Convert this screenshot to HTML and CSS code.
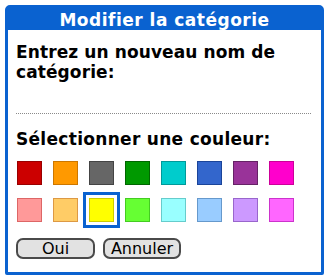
FILE: index.html
```html
<!DOCTYPE html>
<html lang="fr">
<head>
<meta charset="utf-8">
<link rel="stylesheet" href="styles.css">
</head>
<body>
<div class="dialog">
  <div class="title">Modifier la catégorie</div>
  <div class="content">
    <p class="label">Entrez un nouveau nom de<br>catégorie:</p>
    <div class="field"></div>
    <p class="label label-color">Sélectionner une couleur:</p>
    <div class="swatches">
      <span class="sw" style="background:#cc0000;border-color:#990000"></span>
      <span class="sw" style="background:#ff9900;border-color:#cc7700"></span>
      <span class="sw" style="background:#666666;border-color:#444444"></span>
      <span class="sw" style="background:#009900;border-color:#006600"></span>
      <span class="sw" style="background:#00cccc;border-color:#009999"></span>
      <span class="sw" style="background:#3366cc;border-color:#1a4499"></span>
      <span class="sw" style="background:#993399;border-color:#662266"></span>
      <span class="sw" style="background:#ff00cc;border-color:#cc0099"></span>
      <span class="sw" style="background:#ff9999;border-color:#dd6666"></span>
      <span class="sw" style="background:#ffcc66;border-color:#dd9944"></span>
      <span class="sw selected" style="background:#ffff00;border-color:#cccc00"></span>
      <span class="sw" style="background:#66ff33;border-color:#44cc22"></span>
      <span class="sw" style="background:#99ffff;border-color:#66cccc"></span>
      <span class="sw" style="background:#99ccff;border-color:#6699cc"></span>
      <span class="sw" style="background:#cc99ff;border-color:#9966cc"></span>
      <span class="sw" style="background:#ff66ff;border-color:#cc33cc"></span>
    </div>
    <div class="buttons">
      <button class="btn btn-oui">Oui</button>
      <button class="btn btn-annuler">Annuler</button>
    </div>
  </div>
</div>
</body>
</html>
```
FILE: styles.css
```css
html, body {
  margin: 0;
  padding: 0;
  background: #ffffff;
}
body {
  width: 326px;
  height: 276px;
  overflow: hidden;
  font-family: "DejaVu Sans", "Liberation Sans", sans-serif;
}
.dialog {
  box-sizing: border-box;
  margin: 5px 0 0 5px;
  width: 319px;
  height: 270px;
  border: 3px solid #0a62d0;
  border-radius: 5px 5px 2px 2px;
  background: #ffffff;
  display: flex;
  flex-direction: column;
}
.title {
  background: #0a62d0;
  color: #ffffff;
  height: 22px;
  line-height: 24px;
  text-align: center;
  font-weight: bold;
  font-size: 17px;
  letter-spacing: 0.5px;
}
.content {
  padding: 12px 8px 0 8px;
  display: flex;
  flex-direction: column;
}
.label {
  margin: 0;
  font-weight: bold;
  font-size: 17px;
  line-height: 20px;
  color: #000;
  letter-spacing: 0.1px;
}
.field {
  margin: 31px 2px 0 0;
  border-top: 1px dotted #8a8a8a;
  height: 0;
}
.label-color {
  margin-top: 15px;
  letter-spacing: 0.3px;
}
.swatches {
  margin: 12px 0 0 1px;
  display: grid;
  grid-template-columns: repeat(8, 25px);
  grid-auto-rows: 24px;
  column-gap: 11px;
  row-gap: 13px;
}
.sw {
  box-sizing: border-box;
  display: block;
  border: 1px solid;
}
.sw.selected {
  outline: 3px solid #0a62d0;
  outline-offset: 3px;
}
.buttons {
  margin-top: 16px;
  display: flex;
  gap: 8px;
}
.btn {
  box-sizing: border-box;
  height: 21px;
  padding: 0;
  background: #e2e2e2;
  border: 2px solid #4a4a4a;
  border-radius: 7px;
  font-family: "DejaVu Sans", "Liberation Sans", sans-serif;
  font-size: 16px;
  line-height: 16px;
  color: #000;
}
.btn-oui {
  width: 79px;
}
.btn-annuler {
  width: 78px;
}
```
